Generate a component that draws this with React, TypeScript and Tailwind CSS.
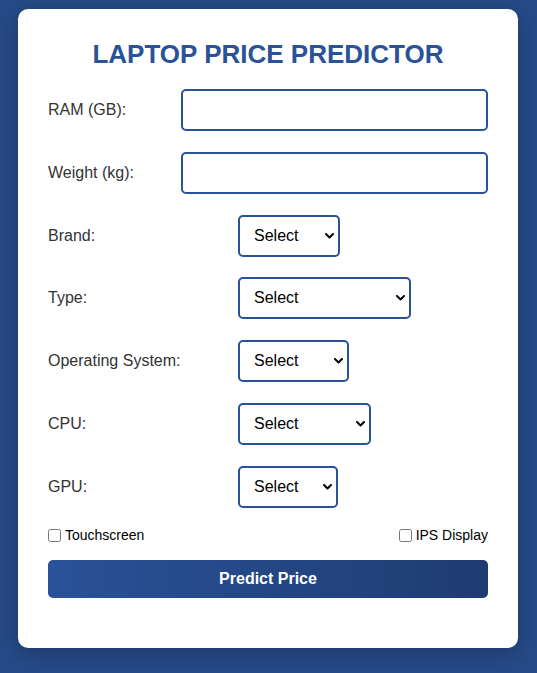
const selects = [
  { label: "Brand:", width: "w-[102px]" },
  { label: "Type:", width: "w-[173px]" },
  { label: "Operating System:", width: "w-[111px]" },
  { label: "CPU:", width: "w-[133px]" },
  { label: "GPU:", width: "w-[100px]" },
];

const font = { fontFamily: '"Liberation Sans", Arial, sans-serif' };

function Chevron() {
  return (
    <svg
      className="pointer-events-none absolute right-[6px] top-1/2 -translate-y-1/2"
      width="9"
      height="6"
      viewBox="0 0 9 6"
      fill="none"
    >
      <polyline points="1,1 4.5,4.5 8,1" stroke="#000" strokeWidth="2" strokeLinecap="round" strokeLinejoin="round" />
    </svg>
  );
}

export default function App() {
  return (
    <div className="min-h-screen bg-[#264a87] px-[18px] pt-[9px] pb-[25px]" style={font}>
      <div className="w-[500px] rounded-[10px] bg-white px-[30px] pt-[30px] pb-[50px] shadow-[0_5px_20px_rgba(0,0,0,0.25)]">
        <h2 className="text-center text-[26px] font-bold leading-[30px] text-[#2a5298]">LAPTOP PRICE PREDICTOR</h2>

        <div className="mt-[20px] flex flex-col gap-[20.8px]">
          {["RAM (GB):", "Weight (kg):"].map((label) => (
            <div key={label} className="flex h-[42px] items-center">
              <label className="w-[133px] text-[16px] text-[#333]">{label}</label>
              <input
                type="text"
                className="h-[42px] w-[307px] rounded-[5px] border-2 border-[#2a5298] bg-white px-[10px] text-[16px] outline-none"
              />
            </div>
          ))}
          {selects.map((s) => (
            <div key={s.label} className="flex h-[42px] items-center">
              <label className="w-[190px] text-[16px] text-[#333]">{s.label}</label>
              <div className={`relative ${s.width}`}>
                <select
                  className="h-[42px] w-full appearance-none rounded-[5px] border-2 border-[#2a5298] bg-white pl-[14px] pr-[18px] text-[16px] text-black outline-none"
                  style={font}
                >
                  <option>Select</option>
                </select>
                <Chevron />
              </div>
            </div>
          ))}
        </div>

        <div className="mt-[17px] flex items-center justify-between text-[14px] text-black">
          <label className="flex items-center gap-[4px]">
            <input type="checkbox" className="h-[13px] w-[13px]" />
            Touchscreen
          </label>
          <label className="flex items-center gap-[4px]">
            <input type="checkbox" className="h-[13px] w-[13px]" />
            IPS Display
          </label>
        </div>

        <button
          type="button"
          className="mt-[14px] h-[38px] w-full rounded-[5px] bg-gradient-to-r from-[#2a5298] to-[#1e3c72] text-[16px] font-bold text-white"
        >
          Predict Price
        </button>
      </div>
    </div>
  );
}
